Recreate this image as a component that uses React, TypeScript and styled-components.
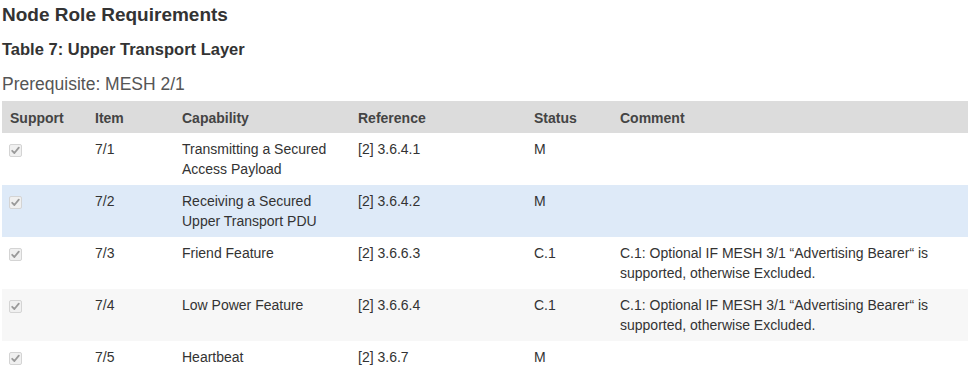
import styled, { createGlobalStyle } from 'styled-components';

const GlobalStyle = createGlobalStyle`
  body {
    margin: 0;
    background: #fff;
    font-family: "Liberation Sans", Arial, sans-serif;
    color: #333;
  }
`;

const Page = styled.div`
  padding: 4px 6px 0 2px;
`;

const Title = styled.h2`
  font-size: 19px;
  font-weight: bold;
  color: #333;
  margin: 0 0 13px;
  line-height: 22px;
`;

const TableTitle = styled.h3`
  font-size: 16.5px;
  font-weight: bold;
  color: #333;
  margin: 0 0 14px;
  line-height: 20px;
`;

const Prereq = styled.p`
  font-size: 17.5px;
  color: #555;
  margin: 0 0 6px;
  line-height: 22px;
`;

const Table = styled.table`
  width: 966px;
  border-collapse: collapse;
  table-layout: fixed;
  font-size: 14px;
  line-height: 20px;
`;

const HeadRow = styled.tr`
  background: #dcdcdc;
`;

const Th = styled.th<{ $w: number }>`
  box-sizing: border-box;
  width: ${(p) => p.$w}px;
  text-align: left;
  font-weight: bold;
  color: #444;
  padding: 7px 8px 5px 8px;
  height: 32px;
`;

const Row = styled.tr<{ $bg: string }>`
  background: ${(p) => p.$bg};
`;

const Td = styled.td`
  vertical-align: top;
  padding: 6px 8px 6px 8px;
  height: 40px;
  color: #333;
`;

const Check = styled.span`
  display: inline-block;
  width: 11px;
  height: 11px;
  margin: 5px 0 0 -1px;
  border: 1px solid #d4d4d4;
  border-radius: 2px;
  background: #f0f0f0;
  position: relative;
  svg {
    position: absolute;
    left: 1px;
    top: 1px;
  }
`;

const rows = [
  { item: '7/1', cap: 'Transmitting a Secured Access Payload', ref: '[2] 3.6.4.1', status: 'M', comment: '', bg: '#fff' },
  { item: '7/2', cap: 'Receiving a Secured Upper Transport PDU', ref: '[2] 3.6.4.2', status: 'M', comment: '', bg: '#deeaf8' },
  {
    item: '7/3',
    cap: 'Friend Feature',
    ref: '[2] 3.6.6.3',
    status: 'C.1',
    comment: 'C.1: Optional IF MESH 3/1 \u201cAdvertising Bearer\u201c is supported, otherwise Excluded.',
    bg: '#fff',
  },
  {
    item: '7/4',
    cap: 'Low Power Feature',
    ref: '[2] 3.6.6.4',
    status: 'C.1',
    comment: 'C.1: Optional IF MESH 3/1 \u201cAdvertising Bearer\u201c is supported, otherwise Excluded.',
    bg: '#f7f7f7',
  },
  { item: '7/5', cap: 'Heartbeat', ref: '[2] 3.6.7', status: 'M', comment: '', bg: '#fff' },
];

const cols = [
  { label: 'Support', w: 85 },
  { label: 'Item', w: 87 },
  { label: 'Capability', w: 176 },
  { label: 'Reference', w: 176 },
  { label: 'Status', w: 86 },
  { label: 'Comment', w: 356 },
];

function CheckMark() {
  return (
    <Check>
      <svg width="9" height="9" viewBox="0 0 9 9">
        <path d="M1.2 4.8 L3.4 7 L7.8 1.6" fill="none" stroke="#9a9a9a" strokeWidth="1.8" strokeLinecap="round" strokeLinejoin="round" />
      </svg>
    </Check>
  );
}

export default function App() {
  return (
    <Page>
      <GlobalStyle />
      <Title>Node Role Requirements</Title>
      <TableTitle>Table 7: Upper Transport Layer</TableTitle>
      <Prereq>Prerequisite: MESH 2/1</Prereq>
      <Table>
        <thead>
          <HeadRow>
            {cols.map((c) => (
              <Th key={c.label} $w={c.w}>
                {c.label}
              </Th>
            ))}
          </HeadRow>
        </thead>
        <tbody>
          {rows.map((r) => (
            <Row key={r.item} $bg={r.bg}>
              <Td>
                <CheckMark />
              </Td>
              <Td>{r.item}</Td>
              <Td>{r.cap}</Td>
              <Td>{r.ref}</Td>
              <Td>{r.status}</Td>
              <Td>{r.comment}</Td>
            </Row>
          ))}
        </tbody>
      </Table>
    </Page>
  );
}
